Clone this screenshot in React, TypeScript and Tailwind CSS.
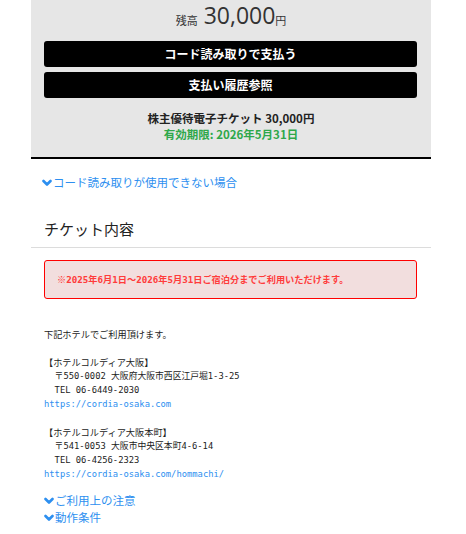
import React from "react";

const jp = "font-['Noto_Sans_CJK_JP',sans-serif]";
const mono = "font-['DejaVu_Sans_Mono','Noto_Sans_CJK_JP',monospace]";

function Chevron() {
  return (
    <svg width="10" height="8" viewBox="0 0 10 8" className="mr-[1px] shrink-0">
      <polyline points="1.5,2 5,5.5 8.5,2" fill="none" stroke="currentColor" strokeWidth="2.6" strokeLinecap="round" strokeLinejoin="round" />
    </svg>
  );
}

function Toggle({ label }: { label: string }) {
  return (
    <div className={`flex items-center text-[11.5px] leading-[17px] text-[#2d8ff0] ${jp}`}>
      <Chevron />
      {label}
    </div>
  );
}

const hotels = [
  {
    name: "【ホテルコルディア大阪】",
    addr: "  〒550-0002 大阪府大阪市西区江戸堀1-3-25",
    tel: "  TEL 06-6449-2030",
    url: "https://cordia-osaka.com",
  },
  {
    name: "【ホテルコルディア大阪本町】",
    addr: "  〒541-0053 大阪市中央区本町4-6-14",
    tel: "  TEL 06-4256-2323",
    url: "https://cordia-osaka.com/hommachi/",
  },
];

export default function App() {
  return (
    <div className="w-[466px] h-[534px] bg-white overflow-hidden text-[#333]">
      {/* Balance panel */}
      <div className="ml-[31px] w-[400px] h-[159px] bg-[#e6e6e6] border-b-2 border-black px-[13px]">
        <div className={`h-[41px] flex items-end justify-center pb-[14px] ${jp}`}>
          <span className="text-[11px] leading-none mr-[6px] mb-[1px]">残高</span>
          <span className="text-[23px] leading-none font-['Open_Sans',sans-serif]">30,000</span>
          <span className="text-[11px] leading-none mb-[1px]">円</span>
        </div>
        <button className={`w-[373px] h-[26px] rounded-[3px] bg-black text-white text-[12px] font-bold ${jp}`}>
          コード読み取りで支払う
        </button>
        <button className={`mt-[5px] w-[373px] h-[26px] rounded-[3px] bg-black text-white text-[12px] font-bold ${jp}`}>
          支払い履歴参照
        </button>
        <div className={`mt-[12px] text-center text-[11.5px] font-bold leading-[16px] ${jp}`}>
          <div className="text-[#222]">株主優待電子チケット 30,000円</div>
          <div className="text-[#2ea84a]">有効期限: 2026年5月31日</div>
        </div>
      </div>

      <div className="ml-[42px] mt-[15px]">
        <Toggle label="コード読み取りが使用できない場合" />
      </div>

      {/* Ticket content */}
      <div className="ml-[31px] w-[400px] mt-[27px] border-b border-[#dcdcdc] pl-[13px] pb-[7px]">
        <h2 className={`text-[15px] leading-[22px] text-[#222] ${jp}`}>チケット内容</h2>
      </div>

      <div className="ml-[44px] w-[373px] mt-[12px] h-[39px] rounded-[3px] border-[1.5px] border-[#ff0000] bg-[#f2dede] flex items-center pl-[12px]">
        <span className={`text-[9.2px] font-bold text-[#ff3b3b] ${mono}`}>
          ※2025年6月1日～2026年5月31日ご宿泊分までご利用いただけます。
        </span>
      </div>

      <div className={`ml-[44px] mt-[28px] whitespace-pre text-[8.8px] leading-[14px] text-[#222] ${mono}`}>
        <div className={`${jp} text-[9.2px] h-[14px]`}>下記ホテルでご利用頂けます。</div>
        <div className="h-[14px]"> </div>
        {hotels.map((h, i) => (
          <div key={i}>
            <div className={`${jp} text-[9.2px] h-[14px]`}>{h.name}</div>
            <div className="h-[14px]">{h.addr}</div>
            <div className="h-[14px]">{h.tel}</div>
            <div className="h-[14px] text-[#2d8ff0]">{h.url}</div>
            {i === 0 && <div className="h-[14px]"> </div>}
          </div>
        ))}
      </div>

      <div className="ml-[44px] mt-[11px]">
        <Toggle label="ご利用上の注意" />
        <Toggle label="動作条件" />
      </div>
    </div>
  );
}
